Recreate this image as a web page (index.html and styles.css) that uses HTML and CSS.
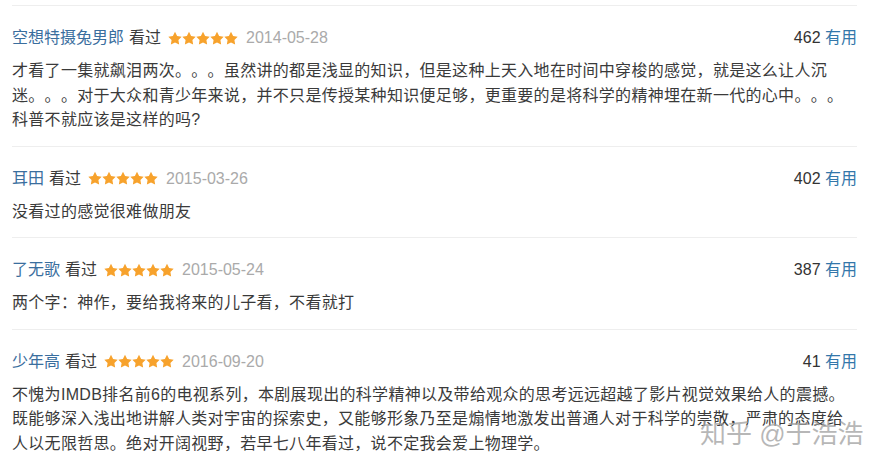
FILE: index.html
```html
<!DOCTYPE html>
<html lang="zh-CN">
<head>
    <meta charset="UTF-8">
    <meta name="viewport" content="width=device-width, initial-scale=1.0">
    <title>短评</title>
    <link rel="stylesheet" href="styles.css">
</head>
<body>
    <div class="comments">
        <div class="comment">
            <div class="comment-info">
                <div class="meta">
                    <a class="user" href="#">空想特摄兔男郎</a>
                    <span>看过</span>
                    <svg class="stars" viewBox="0 0 70 14"><g fill="#f7a22c"><polygon id="s" points="7,0.2 9.12,4.39 13.66,5.14 10.42,8.41 11.11,12.96 7,10.9 2.89,12.96 3.58,8.41 0.34,5.14 4.88,4.39"/><use href="#s" x="14"/><use href="#s" x="28"/><use href="#s" x="42"/><use href="#s" x="56"/></g></svg>
                    <span class="date">2014-05-28</span>
                </div>
                <div class="votes">462 <a href="#">有用</a></div>
            </div>
            <p class="text">才看了一集就飙泪两次。。。虽然讲的都是浅显的知识，但是这种上天入地在时间中穿梭的感觉，就是这么让人沉迷。。。对于大众和青少年来说，并不只是传授某种知识便足够，更重要的是将科学的精神埋在新一代的心中。。。科普不就应该是这样的吗?</p>
        </div>

        <div class="comment">
            <div class="comment-info">
                <div class="meta">
                    <a class="user" href="#">耳田</a>
                    <span>看过</span>
                    <svg class="stars" viewBox="0 0 70 14"><g fill="#f7a22c"><use href="#s"/><use href="#s" x="14"/><use href="#s" x="28"/><use href="#s" x="42"/><use href="#s" x="56"/></g></svg>
                    <span class="date">2015-03-26</span>
                </div>
                <div class="votes">402 <a href="#">有用</a></div>
            </div>
            <p class="text">没看过的感觉很难做朋友</p>
        </div>

        <div class="comment">
            <div class="comment-info">
                <div class="meta">
                    <a class="user" href="#">了无歌</a>
                    <span>看过</span>
                    <svg class="stars" viewBox="0 0 70 14"><g fill="#f7a22c"><use href="#s"/><use href="#s" x="14"/><use href="#s" x="28"/><use href="#s" x="42"/><use href="#s" x="56"/></g></svg>
                    <span class="date">2015-05-24</span>
                </div>
                <div class="votes">387 <a href="#">有用</a></div>
            </div>
            <p class="text">两个字：神作，要给我将来的儿子看，不看就打</p>
        </div>

        <div class="comment">
            <div class="comment-info">
                <div class="meta">
                    <a class="user" href="#">少年高</a>
                    <span>看过</span>
                    <svg class="stars" viewBox="0 0 70 14"><g fill="#f7a22c"><use href="#s"/><use href="#s" x="14"/><use href="#s" x="28"/><use href="#s" x="42"/><use href="#s" x="56"/></g></svg>
                    <span class="date">2016-09-20</span>
                </div>
                <div class="votes">41 <a href="#">有用</a></div>
            </div>
            <p class="text">不愧为IMDB排名前6的电视系列，本剧展现出的科学精神以及带给观众的思考远远超越了影片视觉效果给人的震撼。既能够深入浅出地讲解人类对宇宙的探索史，又能够形象乃至是煽情地激发出普通人对于科学的崇敬，严肃的态度给人以无限哲思。绝对开阔视野，若早七八年看过，说不定我会爱上物理学。</p>
        </div>
    </div>

    <div class="watermark">知乎 @于浩浩</div>
</body>
</html>
```

FILE: styles.css
```css
body {
    margin: 0;
    padding: 5px 32px 0 12px;
    background: #fff;
    font-family: "Liberation Sans", "Noto Sans CJK SC", sans-serif;
    font-size: 16px;
    color: #3a3a3a;
    position: relative;
    overflow: hidden;
    text-spacing-trim: space-all;
}
a {
    color: #37a;
    text-decoration: none;
}
.comment {
    border-top: 1px solid #eee;
    padding: 19px 0 13px;
}
.comment-info {
    display: flex;
    justify-content: space-between;
    align-items: center;
    height: 26px;
    line-height: 26px;
}
.meta {
    display: flex;
    align-items: center;
    gap: 5px;
}
.user {
    color: #3a6e9e;
}
.stars {
    width: 70px;
    height: 15px;
    margin: 0 1px 0 2px;
}
.date {
    color: #aaa;
    margin-left: 2px;
}
.votes {
    color: #333;
}
.text {
    margin: 8px 0 0;
    line-height: 24.5px;
    letter-spacing: 0.3px;
    padding-right: 8px;
}
.watermark {
    position: absolute;
    left: 700px;
    top: 413px;
    font-size: 26px;
    color: rgba(160, 160, 160, 0.75);
    white-space: nowrap;
}
```
